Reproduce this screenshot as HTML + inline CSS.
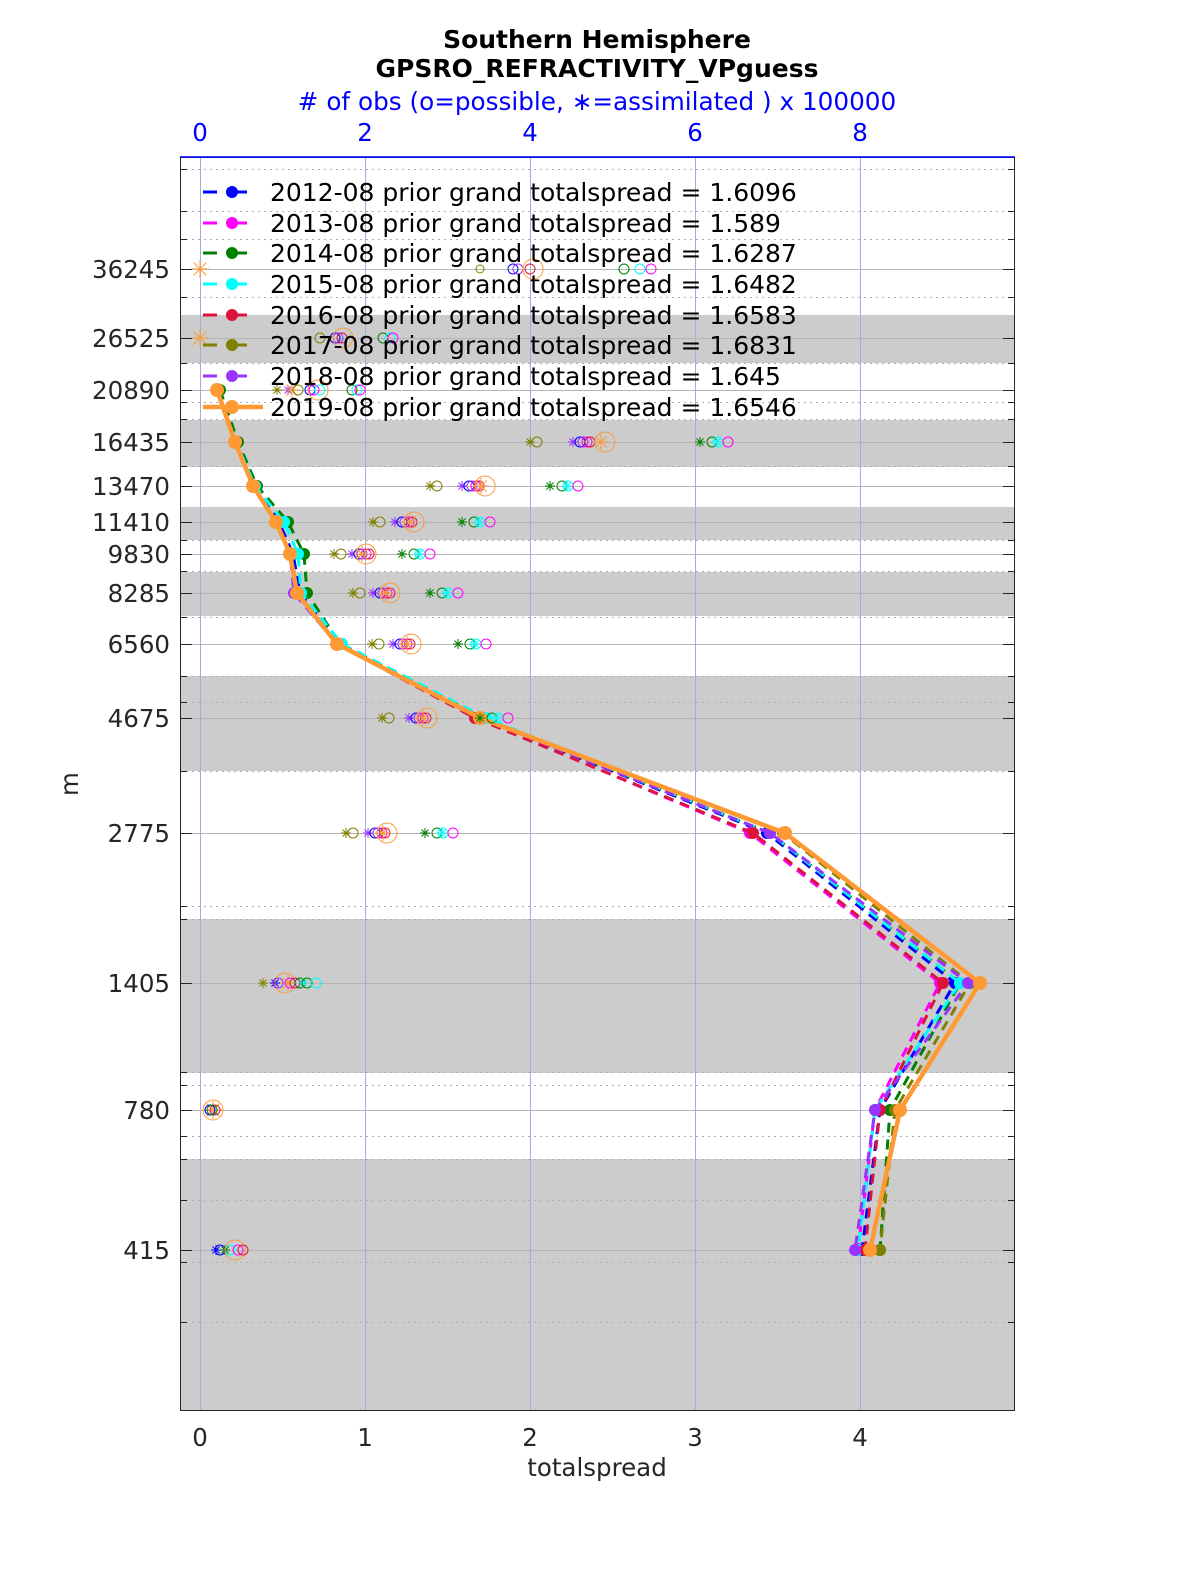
<!DOCTYPE html>
<html><head><meta charset="utf-8"><style>
body{margin:0;background:#fff;width:1200px;height:1575px;overflow:hidden;font-family:"DejaVu Sans","Liberation Sans",sans-serif}
svg{display:block}
</style></head><body>
<svg id="s" width="1200" height="1575" xmlns="http://www.w3.org/2000/svg" font-family="DejaVu Sans, Liberation Sans, sans-serif">
<rect x="180" y="157" width="835" height="1254" fill="#fff"/>
<g fill="#cccccc">
<rect x="180" y="315" width="835" height="48"/>
<rect x="180" y="420" width="835" height="47"/>
<rect x="180" y="507" width="835" height="33"/>
<rect x="180" y="572" width="835" height="44"/>
<rect x="180" y="676" width="835" height="95"/>
<rect x="180" y="919" width="835" height="154"/>
<rect x="180" y="1159" width="835" height="252"/>
</g>
<g id="grid"></g>
<g stroke="#aaaad8" stroke-width="1">
<line x1="200.5" y1="157" x2="200.5" y2="1411"/><line x1="365.5" y1="157" x2="365.5" y2="1411"/><line x1="530.5" y1="157" x2="530.5" y2="1411"/><line x1="695.5" y1="157" x2="695.5" y2="1411"/><line x1="860.5" y1="157" x2="860.5" y2="1411"/>
</g>
<g id="lines"></g>
<g id="obs"></g>
<rect x="180.5" y="157.5" width="834" height="1253" fill="none" stroke="#262626" stroke-width="1"/>
<line x1="180" y1="157" x2="1015" y2="157" stroke="#0000ff" stroke-width="1.5"/>
<g id="ticks" stroke="#262626" stroke-width="1"></g>
<g font-size="24.5" fill="#0000ff" text-anchor="middle">
<text x="200" y="141">0</text><text x="365" y="141">2</text><text x="530" y="141">4</text><text x="695" y="141">6</text><text x="860" y="141">8</text>
</g>
<g font-size="24.5" fill="#262626" text-anchor="middle">
<text x="200" y="1446">0</text><text x="365" y="1446">1</text><text x="530" y="1446">2</text><text x="695" y="1446">3</text><text x="860" y="1446">4</text>
<text x="597" y="1476">totalspread</text>
<text transform="translate(78,784) rotate(-90)">m</text>
</g>
<g font-size="24.5" fill="#262626" text-anchor="end">
<text x="170" y="278">36245</text><text x="170" y="347">26525</text><text x="170" y="399">20890</text><text x="170" y="451">16435</text><text x="170" y="495">13470</text><text x="170" y="531">11410</text><text x="170" y="563">9830</text><text x="170" y="602">8285</text><text x="170" y="653">6560</text><text x="170" y="727">4675</text><text x="170" y="842">2775</text><text x="170" y="992">1405</text><text x="170" y="1119">780</text><text x="170" y="1259">415</text>
</g>
<g font-weight="bold" font-size="25" text-anchor="middle" fill="#000">
<text x="597" y="48">Southern Hemisphere</text>
<text x="597" y="77">GPSRO_REFRACTIVITY_VPguess</text>
</g>
<text x="597" y="110" font-size="24.7" fill="#0000ff" text-anchor="middle"># of obs (o=possible, ∗=assimilated ) x 100000</text>
<g id="leg"></g>
<g font-size="25" fill="#000">
<text x="270" y="201">2012-08 prior grand totalspread = 1.6096</text>
<text x="270" y="232">2013-08 prior grand totalspread = 1.589</text>
<text x="270" y="262">2014-08 prior grand totalspread = 1.6287</text>
<text x="270" y="293">2015-08 prior grand totalspread = 1.6482</text>
<text x="270" y="324">2016-08 prior grand totalspread = 1.6583</text>
<text x="270" y="354">2017-08 prior grand totalspread = 1.6831</text>
<text x="270" y="385">2018-08 prior grand totalspread = 1.645</text>
<text x="270" y="416">2019-08 prior grand totalspread = 1.6546</text>
</g>
</svg>
<script>
var NS="http://www.w3.org/2000/svg";
function el(p,t,a){var e=document.createElementNS(NS,t);for(var k in a)e.setAttribute(k,a[k]);document.getElementById(p).appendChild(e);return e;}
[169,211,239,297,363,402,419,466,540,571,617,676,702,771,906,919,1072,1085,1136,1159,1200,1262,1322].forEach(function(y){
 el("grid","line",{x1:180,x2:1015,y1:y+.5,y2:y+.5,stroke:"#b0b0b0","stroke-dasharray":"2,4"});
 el("ticks","line",{x1:180,x2:187,y1:y+.5,y2:y+.5});el("ticks","line",{x1:1008,x2:1015,y1:y+.5,y2:y+.5});
});
var Y=[269,338,390,442,486,522,554,593,644,718,833,983,1110,1250];
Y.forEach(function(y){
 el("grid","line",{x1:180,x2:1015,y1:y+.5,y2:y+.5,stroke:"#b4b4b4"});
 el("ticks","line",{x1:180,x2:192,y1:y+.5,y2:y+.5});el("ticks","line",{x1:1003,x2:1015,y1:y+.5,y2:y+.5});
});
var C={b:"#0000ff",m:"#ff00ff",g:"#008000",c:"#00ffff",r:"#dc143c",o:"#808000",p:"#9933ff",or:"#ff9933"};
var base=[217,235,253,276,290,297,337,480,785,980,900,870];
var YL=[390,442,486,522,554,593,644,718,833,983,1110,1250];
var series=[
 ["b",[0,2,2,3,3,3,2,0,-18,-25,-20,-8]],
 ["m",[0,0,0,0,0,0,0,-3,-35,-40,-25,-12]],
 ["g",[3,3,4,12,14,10,3,3,-15,-20,-10,10]],
 ["c",[0,1,2,8,8,4,5,6,-15,-20,-25,-12]],
 ["r",[0,0,0,0,0,0,0,-5,-32,-37,-20,-5]],
 ["o",[0,0,0,0,0,0,0,0,-2,-10,-5,10]],
 ["p",[0,0,0,0,0,-3,0,0,-15,-12,-25,-15]]
];
series.forEach(function(s){
 var pts=base.map(function(x,i){return (x+s[1][i])+","+YL[i];}).join(" ");
 el("lines","polyline",{points:pts,fill:"none",stroke:C[s[0]],"stroke-width":3,"stroke-dasharray":"10,7"});
 base.forEach(function(x,i){el("lines","circle",{cx:x+s[1][i],cy:YL[i],r:6,fill:C[s[0]]});});
});
el("lines","polyline",{points:base.map(function(x,i){return x+","+YL[i];}).join(" "),fill:"none",stroke:C.or,"stroke-width":4.5});
base.forEach(function(x,i){el("lines","circle",{cx:x,cy:YL[i],r:7,fill:C.or});});
var lk=["b","m","g","c","r","o","p","or"],ly=[192,223,253,284,315,345,376,407];
lk.forEach(function(k,i){
 if(k=="or"){el("leg","line",{x1:203,x2:263,y1:ly[i],y2:ly[i],stroke:C.or,"stroke-width":4.5});el("leg","circle",{cx:232,cy:ly[i],r:7,fill:C.or});}
 else{el("leg","line",{x1:203,x2:263,y1:ly[i],y2:ly[i],stroke:C[k],"stroke-width":3,"stroke-dasharray":"14,16"});el("leg","circle",{cx:232,cy:ly[i],r:6,fill:C[k]});}
});
function ast(x,y,c,r){r=r||5;for(var a=0;a<4;a++){var t=a*Math.PI/4;el("obs","line",{x1:x-r*Math.cos(t),y1:y-r*Math.sin(t),x2:x+r*Math.cos(t),y2:y+r*Math.sin(t),stroke:c,"stroke-width":1});}}
function circ(x,y,c,r){el("obs","circle",{cx:x,cy:y,r:r||5,fill:"none",stroke:c,"stroke-width":1});}
var rows=[
 [442,530,573,605,700],[486,430,462,485,550],[522,373,395,414,462],[554,334,352,366,402],
 [593,353,373,390,430],[644,372,393,411,458],[718,382,409,427,480],[833,346,368,387,425]];
rows.forEach(function(r){
 var y=r[0];ast(r[1],y,C.o);circ(r[1]+7,y,C.o);ast(r[2],y,C.p);
 circ(r[2]+7,y,C.b);circ(r[2]+10,y,C.p);circ(r[2]+14,y,C.m);circ(r[2]+17,y,C.r);
 circ(r[3],y,C.or,10);ast(r[3]-4,y,C.or,8);
 ast(r[4],y,C.g);circ(r[4]+12,y,C.g);circ(r[4]+18,y,C.c);circ(r[4]+28,y,C.m);ast(r[4]+17,y,C.c);
});
ast(200,269,C.or,9);circ(480,269,C.o,4);circ(513,269,C.b);circ(518,269,C.p);circ(530,269,C.r);circ(533,269,C.or,10);circ(624,269,C.g);circ(640,269,C.c);circ(651,269,C.m);
ast(200,338,C.or,9);circ(320,338,C.o);circ(335,338,C.b);circ(338,338,C.p);circ(342,338,C.r);circ(343,338,C.or,10);circ(383,338,C.g);circ(390,338,C.c);circ(393,338,C.m);
ast(277,390,C.o);ast(288,390,C.p);ast(292,390,C.or,8);circ(298,390,C.o);circ(310,390,C.b);circ(314,390,C.m);circ(318,390,C.or,10);circ(320,390,C.c);circ(352,390,C.g);circ(357,390,C.c);circ(360,390,C.m);
ast(263,983,C.o);ast(275,983,C.b);ast(288,983,C.or,8);circ(285,983,C.or,10);circ(278,983,C.p);circ(290,983,C.m);circ(295,983,C.r);circ(300,983,C.g);ast(303,983,C.c);circ(307,983,C.g);circ(316,983,C.c);
circ(213,1110,C.or,10);ast(213,1110,C.or,9);circ(210,1110,C.b);circ(215,1110,C.r);circ(212,1110,C.g);
ast(216,1250,C.b);circ(220,1250,C.b);ast(225,1250,C.g);circ(230,1250,C.c);circ(235,1250,C.or,10);circ(238,1250,C.m);circ(243,1250,C.r);
</script>
</body></html>
